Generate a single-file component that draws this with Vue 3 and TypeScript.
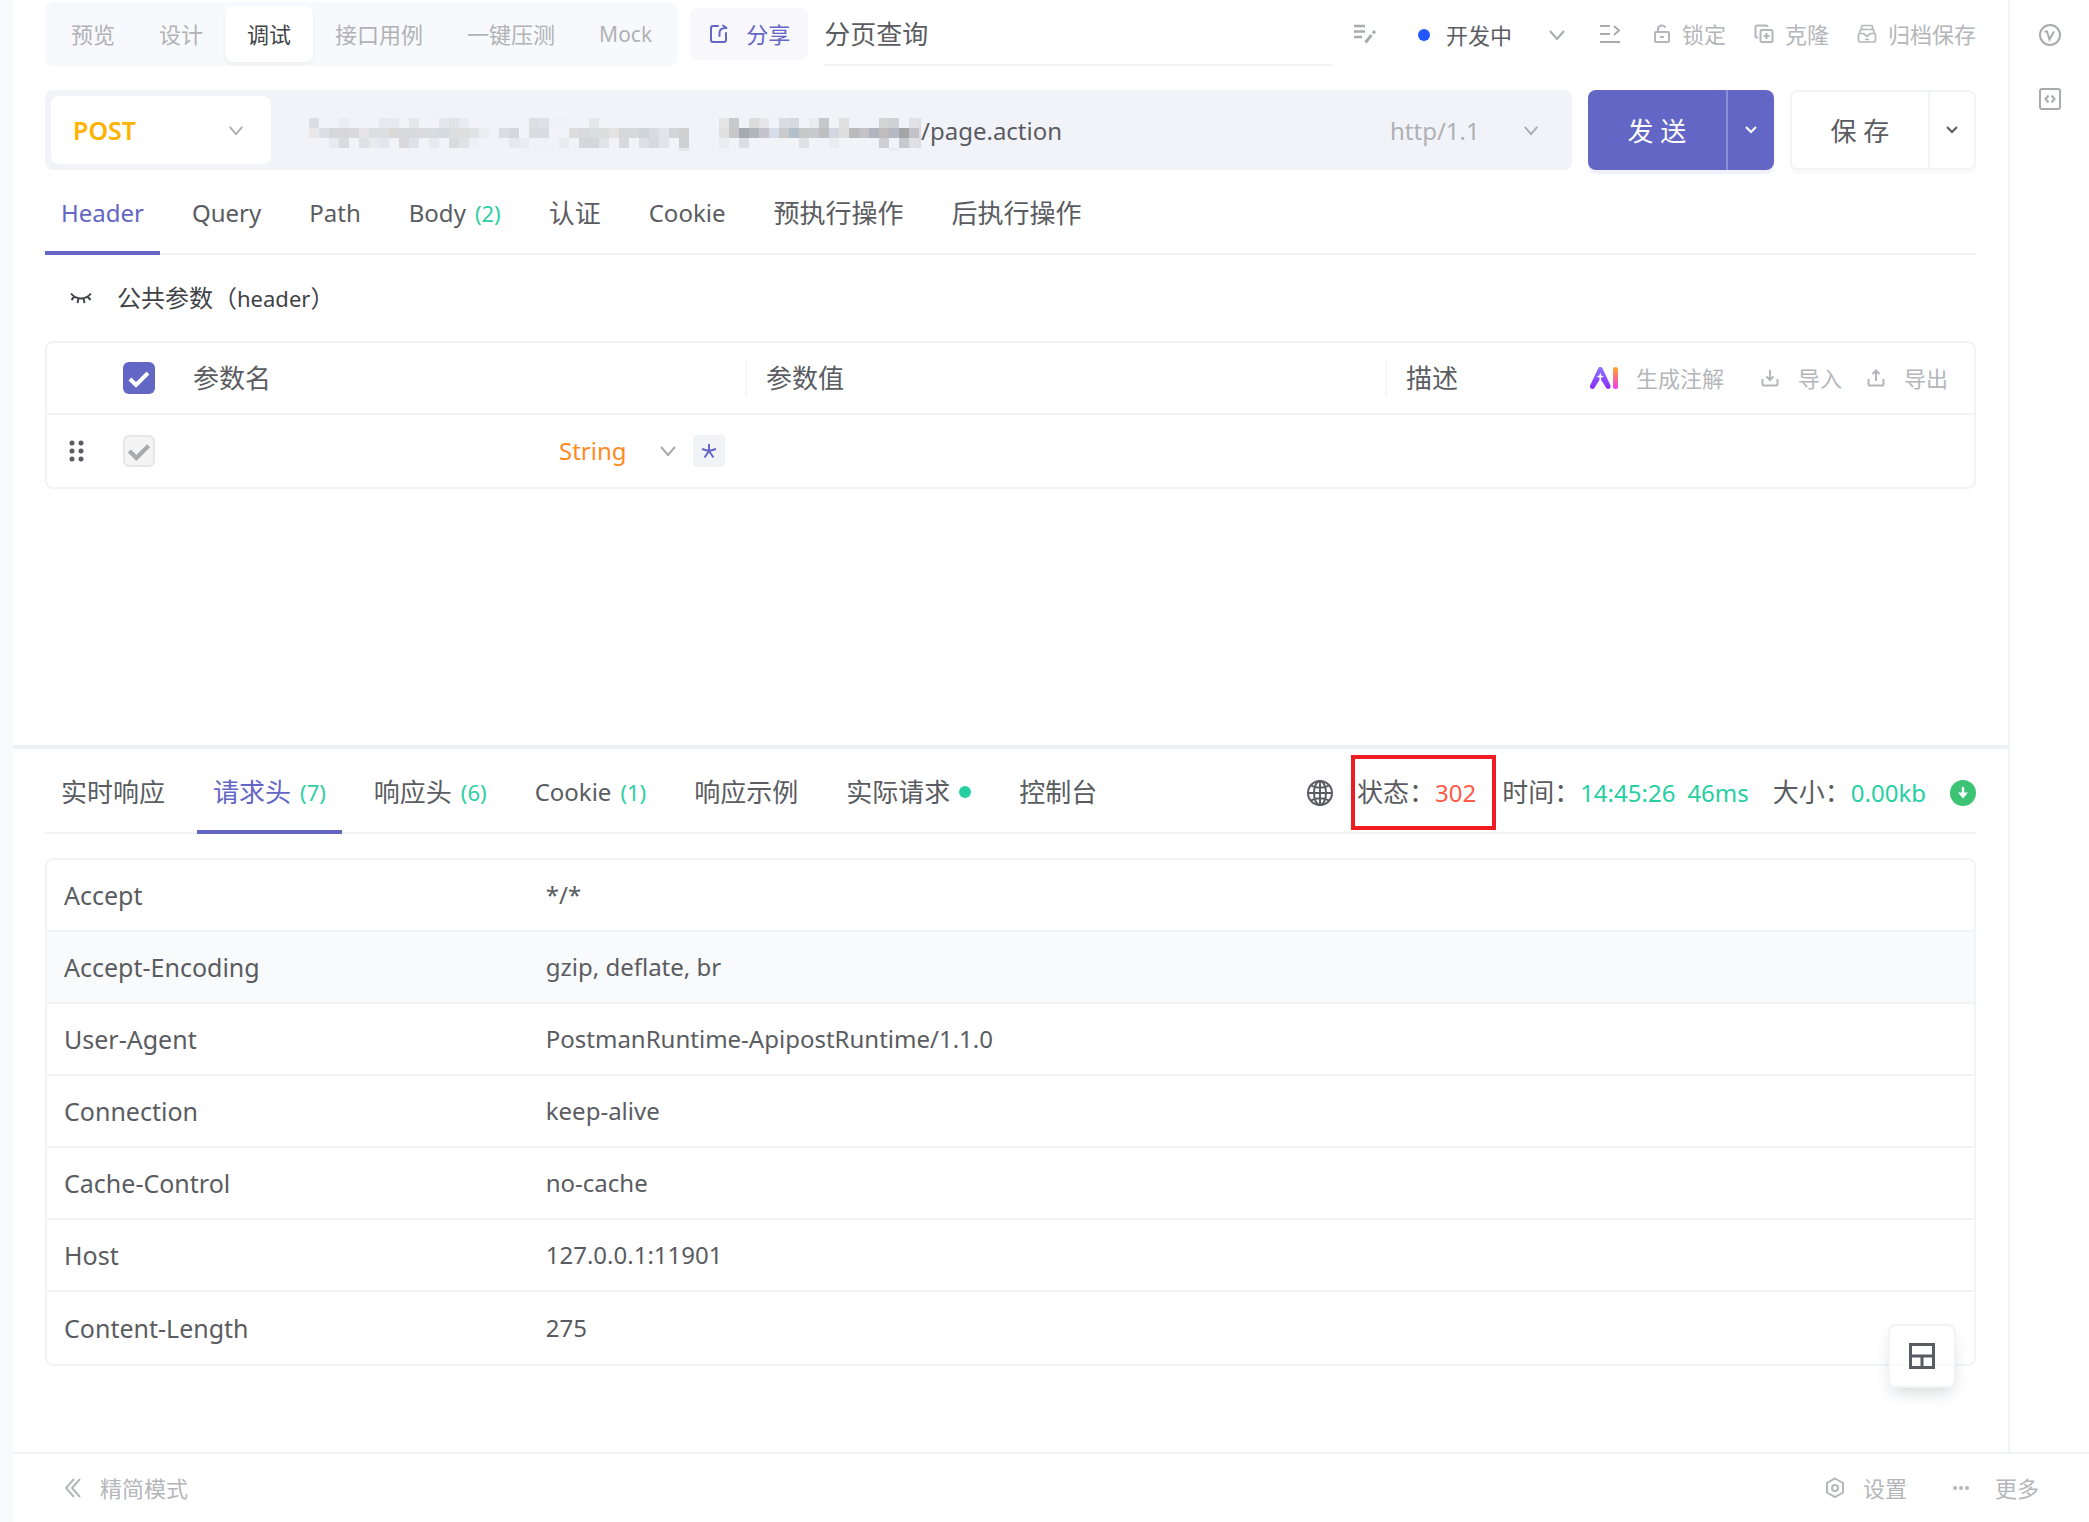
<script setup lang="ts">
import { ref } from 'vue'

interface Tab {
  label: string
  latin?: boolean
  count?: number
  dot?: boolean
}

interface HeaderRow {
  key: string
  value: string
}

interface Block {
  x: number
  y: number
  w: number
  h: number
  fill: string
}

const modes: Tab[] = [
  { label: '预览' },
  { label: '设计' },
  { label: '调试' },
  { label: '接口用例' },
  { label: '一键压测' },
  { label: 'Mock', latin: true },
]
const activeMode = ref('调试')

const requestTabs: Tab[] = [
  { label: 'Header', latin: true },
  { label: 'Query', latin: true },
  { label: 'Path', latin: true },
  { label: 'Body', latin: true, count: 2 },
  { label: '认证' },
  { label: 'Cookie', latin: true },
  { label: '预执行操作' },
  { label: '后执行操作' },
]
const activeRequestTab = ref('Header')

const responseTabs: Tab[] = [
  { label: '实时响应' },
  { label: '请求头', count: 7 },
  { label: '响应头', count: 6 },
  { label: 'Cookie', latin: true, count: 1 },
  { label: '响应示例' },
  { label: '实际请求', dot: true },
  { label: '控制台' },
]
const activeResponseTab = ref('请求头')

const title = ref('分页查询')
const path = ref('/page.action')

const headers: HeaderRow[] = [
  { key: 'Accept', value: '*/*' },
  { key: 'Accept-Encoding', value: 'gzip, deflate, br' },
  { key: 'User-Agent', value: 'PostmanRuntime-ApipostRuntime/1.1.0' },
  { key: 'Connection', value: 'keep-alive' },
  { key: 'Cache-Control', value: 'no-cache' },
  { key: 'Host', value: '127.0.0.1:11901' },
  { key: 'Content-Length', value: '275' },
]

// Masked host part of the address: one string per pixel row, "column:colour".
const maskRows: string[] = [
  '0:dcdde2 3:eaeef2 7:e6e9ed 8:e6e9ed 10:e4e6e8 13:e4e8ec 14:e0e4e6 15:e8ebf0 22:dcdfe1 23:dfe1e6 24:eff3f8 25:eff3f8 28:e5e6e7 41:e5e4e4 42:c7cacd 44:dcdcdb 45:e6e6e8 47:d9dde1 48:d6dadd 50:eaebef 51:c6c8cc 53:dfe0df 57:d3d4d4 58:d0d1d6 60:e1e2e6 61:dcdcdf',
  '0:ebe8ea 1:dcdfe3 2:d6d7da 3:d8d8db 4:d9d9dc 5:e6e4e6 6:dcdee2 7:dcdee2 8:dbd8d8 9:d8dadd 10:d9dadd 11:dadbde 12:d7dce0 13:d4dadd 14:dcdee1 15:e0dfe0 16:e1e2e5 17:ebedf0 19:dcdce2 20:d6d7dc 22:dadde0 23:d8dce1 26:dcdddc 27:d9dadb 28:d8dddf 29:dadedf 30:e4e3e2 31:d6d7da 32:d5d9da 33:cfd4d8 34:d8dbdf 35:e4e5e8 36:d3d6d9 37:cfd0d2 41:e2dfdf 42:c5c7c9 43:a4abb0 44:b0b7bb 45:c5c4cd 46:d6dce8 47:c8cbca 48:b2c0ca 49:c7c9c9 50:c8cacf 51:bebfc3 52:d3d7e0 53:dfdfde 54:bab9bb 55:c3c2c8 56:b2b4bf 57:c1bcbc 58:b5b8c5 59:a4a5a7 60:c2c0c8 61:dcdcdf',
  '2:e6e9ee 3:dadbde 5:dde1e6 6:e8ebee 7:e3e6ee 9:d9d9dc 10:dfe2e8 12:e8eaee 14:dadbdf 15:e0e2e6 16:edf1f5 20:e7e8ed 21:eaecf0 23:eef2f7 25:e7ecef 27:d3d7db 28:d3d7db 29:e0e3e8 31:d8d9dd 33:dde1e5 34:d5dadf 35:e2e5e8 37:cfd0d2 41:ebecf0 43:dbdee0 49:e0e1e6 52:eaecf0 57:cfd0d4 59:c6c9cd 60:e0dfe4 61:dcdcdf',
  '37:e6e8eb 58:ebecf0',
]
const maskBlocks: Block[] = maskRows.flatMap((row, y) =>
  row.split(' ').map((cell) => {
    const [col, colour] = cell.split(':')
    return {
      x: Number(col) * 10,
      y: y * 10,
      w: col === '61' ? 2 : 10,
      h: y === 3 ? 3 : 10,
      fill: '#' + colour,
    }
  }),
)
</script>

<template>
  <div class="app">
    <div class="body">
      <main class="main">
        <section class="request">
          <div class="topbar">
            <nav class="modes">
              <button
                v-for="m in modes"
                :key="m.label"
                type="button"
                class="mode"
                :class="{ active: m.label === activeMode, latin: m.latin }"
                @click="activeMode = m.label"
              >{{ m.label }}</button>
            </nav>
            <button type="button" class="share">
              <svg width="20" height="20" viewBox="0 0 20 20" fill="none" stroke="currentColor" stroke-width="2" stroke-linecap="round" stroke-linejoin="round">
                <path d="M9 2H4a2 2 0 0 0-2 2v12a2 2 0 0 0 2 2h11a2 2 0 0 0 2-2V9" />
                <path d="M10.500 12V9c0-3 2-5 6-5M14 1.500l3.500 2.500" />
              </svg>
              <span>分享</span>
            </button>
            <input v-model="title" class="title" type="text" aria-label="接口名称" />
            <button type="button" class="icon-btn edit" aria-label="编辑">
              <svg width="24" height="24" viewBox="0 0 24 24" fill="none" stroke="currentColor" stroke-width="2">
                <path d="M1 4h11M1 9.500h11M1 15h8" stroke-width="2.500" />
                <path d="M12.500 20.500l6-7.500" stroke-width="3" />
                <path d="M20 11.500l2-2.500" stroke-width="3" />
              </svg>
            </button>
            <span class="state">
              <i class="blue-dot"></i>
              <select aria-label="状态"><option>开发中</option></select>
              <svg class="chev" width="18" height="12" viewBox="0 0 18 12"><path d="M2 2l7 8 7-8" /></svg>
            </span>
            <button type="button" class="icon-btn outline-icon" aria-label="目录">
              <svg width="22" height="22" viewBox="0 0 22 22" fill="none" stroke="currentColor" stroke-width="2">
                <path d="M1 3h10M1 11h10M1 19h20M15 3l5 4.500-5 4.500" />
              </svg>
            </button>
            <button type="button" class="tool">
              <svg width="18" height="20" viewBox="0 0 18 20" fill="none" stroke="currentColor" stroke-width="2">
                <rect x="2" y="8" width="14" height="10" rx="1" />
                <path d="M5 8V5.500a4 4 0 0 1 7.500-2M7 13h4" />
              </svg>
              <span>锁定</span>
            </button>
            <button type="button" class="tool">
              <svg width="20" height="20" viewBox="0 0 20 20" fill="none" stroke="currentColor" stroke-width="2">
                <rect x="6.500" y="6" width="12" height="12" rx="1.500" />
                <path d="M4 13.500H3A1.500 1.500 0 0 1 1.500 12V3A1.500 1.500 0 0 1 3 1.500h9A1.500 1.500 0 0 1 13.500 3M12.500 9v6M9.500 12h6" />
              </svg>
              <span>克隆</span>
            </button>
            <button type="button" class="tool">
              <svg width="20" height="20" viewBox="0 0 20 20" fill="none" stroke="currentColor" stroke-width="1.700">
                <path d="M4.500 5.500V3A1.500 1.500 0 0 1 6 1.500h8A1.500 1.500 0 0 1 15.500 3v2.500M3 9.500V7a1.500 1.500 0 0 1 1.500-1.500h11A1.500 1.500 0 0 1 17 7v2.500" />
                <path d="M6.500 9.500H3A1.500 1.500 0 0 0 1.500 11v5.500A1.500 1.500 0 0 0 3 18h14a1.500 1.500 0 0 0 1.500-1.500V11A1.500 1.500 0 0 0 17 9.500h-3.500L10 12.500zM8 15.500h4" />
              </svg>
              <span>归档保存</span>
            </button>
          </div>

          <div class="address">
            <div class="url">
              <span class="method">
                <select aria-label="请求方法"><option>POST</option></select>
                <svg class="chev" width="16" height="11" viewBox="0 0 18 12"><path d="M2 2l7 8 7-8" /></svg>
              </span>
              <svg class="mask" width="612" height="33" viewBox="0 0 612 33" shape-rendering="crispEdges" aria-hidden="true">
                <rect v-for="(b, i) in maskBlocks" :key="i" :x="b.x" :y="b.y" :width="b.w" :height="b.h" :fill="b.fill" />
              </svg>
              <input v-model="path" class="path" type="text" aria-label="请求地址" />
              <span class="protocol">
                <select aria-label="协议版本"><option>http/1.1</option></select>
                <svg class="chev" width="16" height="11" viewBox="0 0 18 12"><path d="M2 2l7 8 7-8" /></svg>
              </span>
            </div>
            <div class="split send">
              <button type="button" class="act">发 送</button>
              <button type="button" class="more" aria-label="更多发送方式">
                <svg class="chev" width="12" height="8" viewBox="0 0 12 8"><path d="M1 1l5 5 5-5" /></svg>
              </button>
            </div>
            <div class="split save">
              <button type="button" class="act">保 存</button>
              <button type="button" class="more" aria-label="更多保存方式">
                <svg class="chev" width="12" height="8" viewBox="0 0 12 8"><path d="M1 1l5 5 5-5" /></svg>
              </button>
            </div>
          </div>

          <div class="tabs">
            <button
              v-for="t in requestTabs"
              :key="t.label"
              type="button"
              class="tab"
              :class="{ active: t.label === activeRequestTab, latin: t.latin }"
              @click="activeRequestTab = t.label"
            >
              <span>{{ t.label }}</span>
              <span v-if="t.count" class="count">({{ t.count }})</span>
            </button>
          </div>

          <div class="common">
            <svg width="22" height="12" viewBox="0 0 22 12" fill="none" stroke="currentColor" stroke-width="2">
              <path d="M1 1.500c5 6.500 15 6.500 20 0M4 5l-2.500 3M8.500 6.500L7.500 11M13.500 6.500l1 4.500M18 5l2.500 3" />
            </svg>
            <span>公共参数（<span class="scope">header</span>）</span>
          </div>

          <table class="grid params">
            <colgroup>
              <col class="c-drag" />
              <col class="c-check" />
              <col class="c-name" />
              <col class="c-value" />
              <col />
            </colgroup>
            <thead>
              <tr>
                <th></th>
                <th><input type="checkbox" class="check" checked aria-label="全选" /></th>
                <th>参数名</th>
                <th class="ruled">参数值</th>
                <th class="ruled">
                  <div class="desc">
                    <span>描述</span>
                    <button type="button" class="tool ai">
                      <svg width="30" height="24" viewBox="0 0 30 24">
                        <defs>
                          <linearGradient id="ai-a" x1="0" y1="0" x2="0" y2="1">
                            <stop offset="0" stop-color="#8b78ff" />
                            <stop offset="1" stop-color="#8a2cff" />
                          </linearGradient>
                          <linearGradient id="ai-i" x1="0" y1="0" x2="0" y2="1">
                            <stop offset="0" stop-color="#ffa81f" />
                            <stop offset="1" stop-color="#f53af0" />
                          </linearGradient>
                        </defs>
                        <path fill="url(#ai-a)" d="M9 2.500c.8-2 3.800-2 4.600 0l8 17.200c.8 2.600-2.600 4.300-4.400 2.300l-5-8c-.6-.8-1.200-.8-1.800 0l-5 8c-1.800 2-5.200.3-4.400-2.300z" />
                        <path fill="#fff" d="M11.300 6.500l1 3 2.700 1-2.700 1-.6 4h-.8l-.6-4-2.700-1 2.700-1z" />
                        <rect fill="url(#ai-i)" x="24" y="1" width="5" height="22" rx="2.500" />
                      </svg>
                      <span>生成注解</span>
                    </button>
                    <button type="button" class="tool port">
                      <svg width="18" height="20" viewBox="0 0 18 20" fill="none" stroke="currentColor" stroke-width="2">
                        <path d="M1.500 11v5A1.500 1.500 0 0 0 3 17.500h12a1.500 1.500 0 0 0 1.500-1.500v-5M9 2v10M5.500 8.500L9 12l3.500-3.500" />
                      </svg>
                      <span>导入</span>
                    </button>
                    <button type="button" class="tool port">
                      <svg width="18" height="20" viewBox="0 0 18 20" fill="none" stroke="currentColor" stroke-width="2">
                        <path d="M1.500 11v5A1.500 1.500 0 0 0 3 17.500h12a1.500 1.500 0 0 0 1.500-1.500v-5M9 13V3M5.500 6L9 2.500 12.500 6" />
                      </svg>
                      <span>导出</span>
                    </button>
                  </div>
                </th>
              </tr>
            </thead>
            <tbody>
              <tr>
                <td>
                  <svg class="grip" width="16" height="22" viewBox="0 0 16 22" fill="currentColor">
                    <circle cx="3" cy="3" r="2.500" /><circle cx="12" cy="3" r="2.500" />
                    <circle cx="3" cy="11" r="2.500" /><circle cx="12" cy="11" r="2.500" />
                    <circle cx="3" cy="19" r="2.500" /><circle cx="12" cy="19" r="2.500" />
                  </svg>
                </td>
                <td><input type="checkbox" class="check" checked disabled aria-label="启用参数" /></td>
                <td>
                  <div class="type">
                    <select aria-label="参数类型"><option>String</option></select>
                    <svg class="chev" width="18" height="12" viewBox="0 0 18 12"><path d="M2 2l7 8 7-8" /></svg>
                    <button type="button" class="star" aria-label="必填">
                      <svg width="16" height="16" viewBox="0 0 16 16" fill="none" stroke="currentColor" stroke-width="2">
                        <path d="M8 8V1M8 8L1 6M8 8l7-2M8 8l-4.500 6.500M8 8l4.500 6.500" />
                      </svg>
                    </button>
                  </div>
                </td>
                <td></td>
                <td></td>
              </tr>
            </tbody>
          </table>
        </section>

        <div class="divider"></div>

        <section class="response">
          <div class="tabs">
            <button
              v-for="t in responseTabs"
              :key="t.label"
              type="button"
              class="tab"
              :class="{ active: t.label === activeResponseTab, latin: t.latin }"
              @click="activeResponseTab = t.label"
            >
              <span>{{ t.label }}</span>
              <span v-if="t.count" class="count">({{ t.count }})</span>
              <i v-if="t.dot" class="green-dot"></i>
            </button>
            <div class="stats">
              <svg class="globe" width="26" height="26" viewBox="0 0 26 26" fill="none" stroke="currentColor" stroke-width="2">
                <circle cx="13" cy="13" r="12" />
                <ellipse cx="13" cy="13" rx="6" ry="12" />
                <path d="M13 1v24M1 13h24M4 5.500c5 3 13 3 18 0M4 20.500c5-3 13-3 18 0" />
              </svg>
              <span class="status">状态：<b class="num bad">302</b></span>
              <span class="stat">时间：<b class="num">14:45:26</b><b class="num">46ms</b></span>
              <span class="stat">大小：<b class="num">0.00kb</b></span>
              <button type="button" class="download" aria-label="下载">
                <svg width="26" height="26" viewBox="0 0 26 26">
                  <circle cx="13" cy="13" r="13" fill="#3cc373" />
                  <path d="M13 8v6" stroke="#fff" stroke-width="2.500" stroke-linecap="round" />
                  <path d="M8 12.500h10L13 18.500z" fill="#fff" />
                </svg>
              </button>
            </div>
          </div>

          <table class="grid heads">
            <tbody>
              <tr v-for="(h, i) in headers" :key="h.key" :class="{ shaded: i === 1 }">
                <th scope="row">{{ h.key }}</th>
                <td>{{ h.value }}</td>
              </tr>
            </tbody>
          </table>

          <button type="button" class="layout-btn" aria-label="切换布局">
            <svg width="26" height="26" viewBox="0 0 26 26" fill="none" stroke="currentColor" stroke-width="3">
              <path d="M1.500 1.500h23v23h-23zM1.500 13h23M13 13v11.500" />
            </svg>
          </button>
        </section>
      </main>

      <aside class="rail">
        <button type="button" class="icon-btn" aria-label="变量">
          <svg width="24" height="24" viewBox="0 0 24 24" fill="none" stroke="currentColor" stroke-width="2">
            <circle cx="12" cy="12" r="10" />
            <path d="M6.500 8.500H9l2.500 8L16 8.500" />
          </svg>
        </button>
        <button type="button" class="icon-btn" aria-label="代码">
          <svg width="24" height="24" viewBox="0 0 24 24" fill="none" stroke="currentColor" stroke-width="2">
            <rect x="2" y="2" width="20" height="20" rx="2" />
            <path d="M10.500 8.500L7.500 12l3 3.500M13.500 8.500l3 3.500-3 3.500" />
          </svg>
        </button>
      </aside>
    </div>

    <footer class="footer">
      <button type="button" class="foot compact">
        <svg width="18" height="20" viewBox="0 0 18 20" fill="none" stroke="currentColor" stroke-width="2">
          <path d="M10 1L2 10l8 9M16 1L8 10l8 9" />
        </svg>
        <span>精简模式</span>
      </button>
      <button type="button" class="foot">
        <svg width="20" height="22" viewBox="0 0 20 22" fill="none" stroke="currentColor" stroke-width="2">
          <path d="M10 1.500l8 4.500v9.500l-8 4.500-8-4.500V6z" />
          <circle cx="10" cy="11" r="3" />
        </svg>
        <span>设置</span>
      </button>
      <button type="button" class="foot menu">
        <svg width="16" height="4" viewBox="0 0 16 4" fill="currentColor">
          <circle cx="2" cy="2" r="2" /><circle cx="8" cy="2" r="2" /><circle cx="14" cy="2" r="2" />
        </svg>
        <span>更多</span>
      </button>
    </footer>
  </div>
</template>

<style>
body {
  margin: 0;
  background: #fff;
}
</style>

<style scoped>
.app {
  display: flex;
  flex-direction: column;
  min-height: 100vh;
  box-sizing: border-box;
  border-left: 13px solid #f8fafc;
  background: #fff;
  color: #5a5c61;
  font-family: "Noto Sans", "Noto Sans CJK SC", sans-serif;
  font-size: 26px;
  line-height: 36px;
}

button,
input,
select {
  margin: 0;
  padding: 0;
  border: 0;
  background: none;
  color: inherit;
  font: inherit;
}

select {
  appearance: none;
  outline: none;
}

svg {
  display: block;
  flex: none;
}

.chev {
  fill: none;
  stroke: currentColor;
  stroke-width: 2;
}

.body {
  display: flex;
  flex: 1;
}

.main {
  display: flex;
  flex: 1;
  flex-direction: column;
  min-width: 0;
}

.request,
.response {
  box-sizing: border-box;
  padding: 0 32px;
}

.request {
  flex: 745 1 0;
}

.response {
  position: relative;
  flex: 703 1 0;
}

.divider {
  height: 4px;
  background: #eef0f3;
}

/* top bar */
.topbar {
  display: flex;
  align-items: center;
  padding-top: 2px;
  height: 64px;
  color: #b0b2b5;
  font-size: 22px;
}

.modes {
  display: flex;
  padding: 4px;
  border-radius: 8px;
  background: #f8f9fc;
}

.mode {
  height: 56px;
  padding: 0 22px;
  border-radius: 8px;
}

.mode.latin {
  font-size: 21px;
}

.mode.active {
  background: #fff;
  color: #404246;
  box-shadow: 0 2px 4px rgba(0, 0, 0, 0.05);
}

.share {
  display: flex;
  align-items: center;
  gap: 17px;
  height: 52px;
  margin: 0 16px 0 12px;
  padding: 0 18px 0 19px;
  border-radius: 8px;
  background: #f7f7fc;
  color: #6466c6;
}

.title {
  flex: 1;
  min-width: 0;
  height: 62px;
  border-bottom: 2px solid #f2f3f5;
  color: #5a5c61;
  font-size: 26px;
  outline: none;
}

.icon-btn {
  color: #a8aaad;
}

.edit {
  margin: 0 41px 0 21px;
}

.state {
  display: flex;
  align-items: center;
  gap: 16px;
  padding-top: 2px;
  color: #5a5c61;
}

.state select {
  width: 86px;
}

.state .chev {
  color: #a8aaad;
}

.blue-dot {
  width: 12px;
  height: 12px;
  border-radius: 50%;
  background: #2456ff;
}

.outline-icon {
  margin-left: 33px;
}

.tool {
  display: flex;
  align-items: center;
  gap: 11px;
  margin-left: 28px;
  color: #b4b6b9;
  font-size: 22px;
}

.outline-icon + .tool {
  margin-left: 32px;
}

/* address row */
.address {
  display: flex;
  gap: 16px;
  margin-top: 24px;
}

.url {
  display: flex;
  flex: 1;
  align-items: center;
  box-sizing: border-box;
  min-width: 0;
  height: 80px;
  padding: 6px;
  border-radius: 8px;
  background: #f2f3f8;
}

.method {
  display: flex;
  align-items: center;
  box-sizing: border-box;
  width: 220px;
  height: 68px;
  padding: 0 27px 0 22px;
  border-radius: 8px;
  background: #fff;
  color: #ffb200;
  font-size: 25px;
  font-weight: 600;
}

.method select,
.protocol select {
  flex: 1;
  min-width: 0;
}

.method .chev,
.protocol .chev {
  color: #a8aaad;
}

.mask {
  margin: 8px 0 0 38px;
}

.path {
  flex: 1;
  min-width: 0;
  padding-top: 2px;
  font-size: 24px;
  outline: none;
}

.protocol {
  display: flex;
  align-items: center;
  width: 149px;
  margin-right: 27px;
  color: #aeb0b4;
  font-size: 24px;
}

.protocol select {
  padding-top: 2px;
}

.split {
  display: flex;
  box-sizing: border-box;
  width: 186px;
  height: 80px;
  border-radius: 8px;
}

.act {
  flex: 1;
  padding-top: 2px;
}

.more {
  display: flex;
  align-items: center;
  justify-content: center;
  width: 48px;
  border-left: 2px solid #f2f3f5;
}

.send {
  background: #6466c6;
  color: #fff;
  box-shadow: 0 4px 0 #f1f1fc;
}

.send .more {
  border-color: #8b8dd5;
}

.save {
  border: 2px solid #f2f3f5;
  box-shadow: 0 4px 0 #fafafa;
}

.save .more {
  width: 46px;
}

/* tab strips */
.tabs {
  display: flex;
  gap: 16px;
  box-sizing: border-box;
  height: 85px;
  border-bottom: 2px solid #f2f3f5;
}

.tab {
  display: flex;
  align-items: center;
  gap: 9px;
  height: 85px;
  padding: 4px 16px 0;
  border-bottom: 4px solid transparent;
  box-sizing: border-box;
  white-space: nowrap;
}

.tab.latin {
  font-size: 24px;
}

.tab.active {
  border-color: #6466c6;
  color: #6466c6;
}

.count {
  color: #2ecfa3;
  font-size: 22px;
}

.green-dot {
  width: 12px;
  height: 12px;
  border-radius: 50%;
  background: #26cfa2;
}

/* shared parameter row */
.common {
  display: flex;
  align-items: center;
  gap: 25px;
  height: 86px;
  padding-left: 25px;
  color: #404246;
  font-size: 24px;
}

.scope {
  font-size: 22px;
}

/* tables */
.grid {
  width: 100%;
  border: 2px solid #f2f3f5;
  border-radius: 8px;
  border-spacing: 0;
  table-layout: fixed;
  overflow: hidden;
}

.grid th,
.grid td {
  box-sizing: border-box;
  height: 72px;
  padding: 0;
  border-bottom: 2px solid #f2f3f5;
  font-weight: 400;
  text-align: left;
}

.grid tbody tr:last-child > * {
  border-bottom: 0;
}

.c-drag {
  width: 76px;
}

.c-check {
  width: 70px;
}

.c-name {
  width: 553px;
}

.c-value {
  width: 640px;
}

.check {
  display: block;
  appearance: none;
  width: 32px;
  height: 32px;
  border-radius: 6px;
  background: #6466c6 url("data:image/svg+xml,%3Csvg xmlns='http://www.w3.org/2000/svg' viewBox='0 0 32 32'%3E%3Cpath d='M7 17l6 6 12-12' fill='none' stroke='%23fff' stroke-width='4'/%3E%3C/svg%3E");
}

.check:disabled {
  border: 2px solid #e6e6e7;
  background: #f4f4f5 url("data:image/svg+xml,%3Csvg xmlns='http://www.w3.org/2000/svg' viewBox='0 0 32 32'%3E%3Cpath d='M5 16l8 8 14-14' fill='none' stroke='%23a8aaad' stroke-width='5'/%3E%3C/svg%3E");
}

.params .ruled {
  padding-left: 20px;
  background: linear-gradient(#f2f3f5, #f2f3f5) 0 17px / 1px 36px no-repeat;
}

.desc {
  display: flex;
  align-items: center;
  padding-right: 26px;
}

.desc .ai {
  gap: 17px;
  margin-left: auto;
}

.port {
  gap: 19px;
  margin-left: 37px;
}

.port + .port {
  margin-left: 25px;
}

.grip {
  margin-left: 22px;
}

.type {
  display: flex;
  align-items: center;
  justify-content: flex-end;
  padding-right: 21px;
  color: #ff8a1f;
  font-size: 24px;
}

.type select {
  width: 100px;
}

.type .chev {
  margin-right: 16px;
  color: #a8aaad;
}

.star {
  display: flex;
  align-items: center;
  justify-content: center;
  width: 32px;
  height: 32px;
  border-radius: 4px;
  background: #f2f3f6;
  color: #6466c6;
}

.heads {
  margin-top: 24px;
  font-size: 24px;
}

.heads th {
  width: 25%;
  padding-left: 17px;
  font-size: 25px;
}

.heads td {
  padding-left: 17px;
}

.shaded {
  background: #f8fafc;
}

/* response metrics */
.stats {
  display: flex;
  align-items: center;
  margin-left: auto;
  padding-top: 4px;
  white-space: nowrap;
}

.globe {
  margin-right: 18px;
}

.status {
  box-sizing: border-box;
  height: 75px;
  padding: 0 16px 0 2px;
  border: 4px solid #f01c24;
  line-height: 67px;
}

.stat {
  padding-left: 6px;
}

.stat + .stat {
  padding-left: 24px;
}

.num {
  color: #26cfa2;
  font-size: 24px;
  font-weight: 400;
}

.num + .num {
  margin-left: 12px;
}

.num.bad {
  color: #ff5b4a;
}

.download {
  margin-left: 24px;
}

.layout-btn {
  position: absolute;
  right: 52px;
  bottom: 64px;
  display: flex;
  align-items: center;
  justify-content: center;
  box-sizing: border-box;
  width: 68px;
  height: 64px;
  border: 2px solid #f2f3f5;
  border-radius: 8px;
  background: rgba(255, 255, 255, 0.6);
  box-shadow: 0 8px 16px -4px rgba(30, 40, 60, 0.18);
  color: #5a5c61;
}

/* right rail */
.rail {
  display: flex;
  flex-direction: column;
  align-items: center;
  gap: 40px;
  box-sizing: border-box;
  width: 81px;
  padding-top: 23px;
  border-left: 2px solid #f2f3f5;
}

/* footer */
.footer {
  display: flex;
  flex: none;
  align-items: center;
  gap: 46px;
  box-sizing: border-box;
  height: 70px;
  padding: 0 50px 0 51px;
  border-top: 2px solid #f2f3f5;
  color: #b4b6b9;
  font-size: 22px;
}

.foot {
  display: flex;
  align-items: center;
  gap: 18px;
}

.foot.compact {
  margin-right: auto;
}

.foot.menu {
  gap: 26px;
}
</style>
